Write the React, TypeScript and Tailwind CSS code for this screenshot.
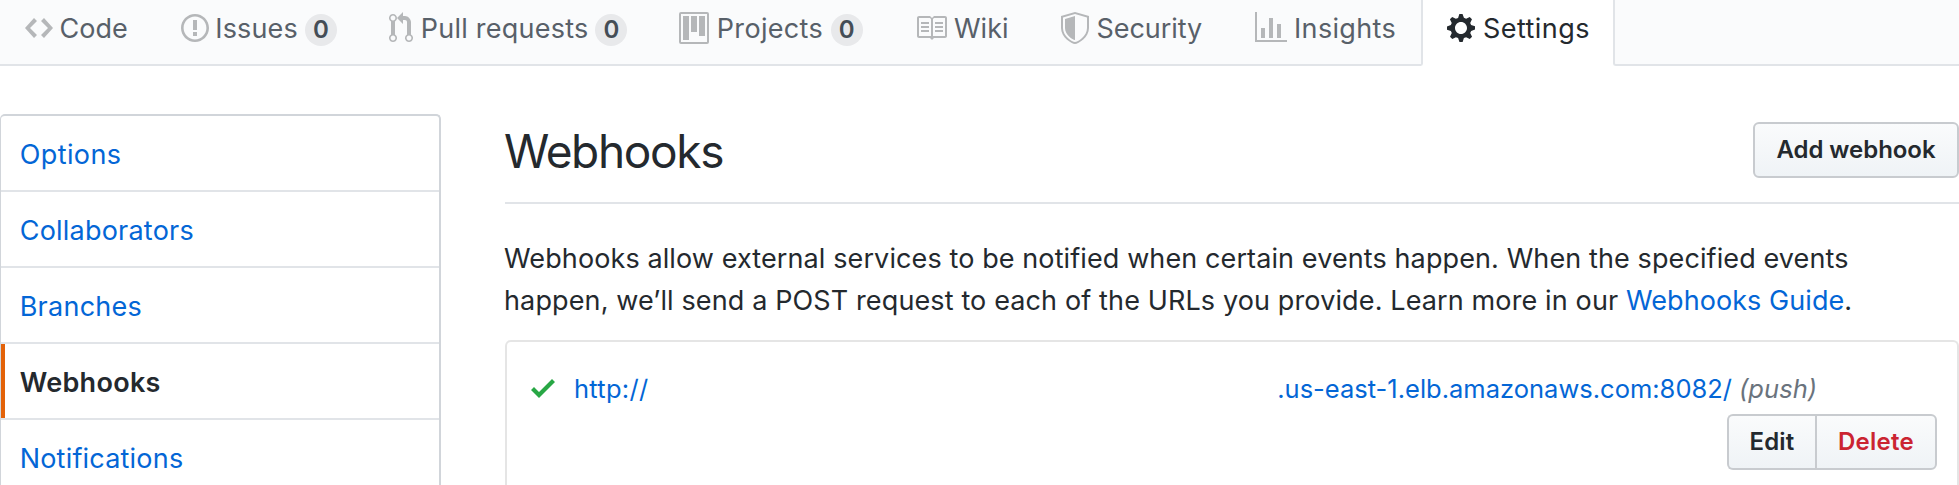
import type { ReactNode } from 'react';

type IconProps = { d: string; box: number; className: string };

function Octicon({ d, box, className }: IconProps) {
  return (
    <svg viewBox={`0 0 ${box} 16`} className={`h-8 shrink-0 ${className}`} fill="currentColor" fillRule="evenodd" aria-hidden="true">
      <path d={d} />
    </svg>
  );
}

const icons = {
  code: 'M9.5 3L8 4.5 11.5 8 8 11.5 9.5 13 14 8 9.5 3zm-5 0L0 8l4.5 5L6 11.5 2.5 8 6 4.5 4.5 3z',
  issue: 'M7 2.3c3.14 0 5.7 2.56 5.7 5.7s-2.56 5.7-5.7 5.7A5.71 5.71 0 0 1 1.3 8c0-3.14 2.56-5.7 5.7-5.7zM7 1C3.14 1 0 4.14 0 8s3.14 7 7 7 7-3.14 7-7-3.14-7-7-7zm1 3H6v5h2V4zm0 6H6v2h2v-2z',
  pull: 'M11 11.28V5c-.03-.78-.34-1.47-.94-2.06C9.46 2.35 8.78 2.03 8 2H7V0L4 3l3 3V4h1c.27.02.48.11.69.31.21.2.3.42.31.69v6.28A1.993 1.993 0 0 0 10 15a1.993 1.993 0 0 0 1-3.72zm-1 2.92c-.66 0-1.2-.55-1.2-1.2 0-.65.55-1.2 1.2-1.2.65 0 1.2.55 1.2 1.2 0 .65-.55 1.2-1.2 1.2zM4 3c0-1.11-.89-2-2-2a1.993 1.993 0 0 0-1 3.72v6.56A1.993 1.993 0 0 0 2 15a1.993 1.993 0 0 0 1-3.72V4.72c.59-.34 1-.98 1-1.72zm-.8 10c0 .66-.55 1.2-1.2 1.2-.65 0-1.2-.55-1.2-1.2 0-.65.55-1.2 1.2-1.2.65 0 1.2.55 1.2 1.2zM2 4.2C1.34 4.2.8 3.65.8 3c0-.65.55-1.2 1.2-1.2.65 0 1.2.55 1.2 1.2 0 .65-.55 1.2-1.2 1.2z',
  project: 'M10 12h3V2h-3v10zm-4-2h3V2H6v8zm-4 4h3V2H2v12zm-1 1h13V1H1v14zM14 0H1a1 1 0 0 0-1 1v14a1 1 0 0 0 1 1h13a1 1 0 0 0 1-1V1a1 1 0 0 0-1-1z',
  book: 'M3 5h4v1H3V5zm0 3h4V7H3v1zm0 2h4V9H3v1zm11-5h-4v1h4V5zm0 2h-4v1h4V7zm0 2h-4v1h4V9zm2-6v9c0 .55-.45 1-1 1H9.5l-1 1-1-1H2c-.55 0-1-.45-1-1V3c0-.55.45-1 1-1h5.5l1 1 1-1H15c.55 0 1 .45 1 1zm-8 .5L7.5 3H2v9h6V3.5zm7-.5H9.5l-.5.5V12h6V3z',
  shield: 'M0 2l7-2 7 2v6.02C14 12.69 8.69 16 7 16c-1.69 0-7-3.31-7-7.98V2zm1 .75L7 1l6 1.75v5.268C13 12.104 8.449 15 7 15c-1.449 0-6-2.896-6-6.982V2.75zm1 .75L7 2v12c-1.207 0-5-2.482-5-5.985V3.5z',
  graph: 'M16 14v1H0V0h1v14h15zM5 13H3V8h2v5zm4 0H7V3h2v10zm4 0h-2V6h2v7z',
  gear: 'M14 8.77v-1.6l-1.94-.64-.45-1.09.88-1.84-1.13-1.13-1.81.91-1.09-.45-.69-1.92h-1.6l-.63 1.94-1.11.45-1.84-.88-1.13 1.13.91 1.81-.45 1.09L0 7.23v1.59l1.94.64.45 1.09-.88 1.84 1.13 1.13 1.81-.91 1.09.45.69 1.92h1.59l.63-1.94 1.11-.45 1.84.88 1.13-1.13-.92-1.81.47-1.09L14 8.75v.02zM7 11c-1.66 0-3-1.34-3-3s1.34-3 3-3 3 1.34 3 3-1.34 3-3 3z',
  check: 'M12 5l-8 8-4-4 1.5-1.5L4 10l6.5-6.5L12 5z',
};

type Tab = { label: string; icon: string; box: number; iconClass: string; width: string; text: string; count?: string };

const tabs: Tab[] = [
  { label: 'Code', icon: icons.code, box: 14, iconClass: 'w-7', width: 'w-[156px]', text: 'ml-[6.5px]' },
  { label: 'Issues', icon: icons.issue, box: 14, iconClass: 'w-7', width: 'w-[208px]', text: 'ml-[6.3px] tracking-[0.148px]', count: 'ml-[7.1px]' },
  { label: 'Pull requests', icon: icons.pull, box: 12, iconClass: 'w-6', width: 'w-[290px]', text: 'ml-[7.7px] tracking-[0.242px]', count: 'ml-[7px]' },
  { label: 'Projects', icon: icons.project, box: 15, iconClass: 'w-[30px]', width: 'w-[236px]', text: 'ml-[7.8px] tracking-[0.325px]', count: 'ml-[7.5px]' },
  { label: 'Wiki', icon: icons.book, box: 16, iconClass: 'w-8', width: 'w-[146px]', text: 'ml-[7px]' },
  { label: 'Security', icon: icons.shield, box: 14, iconClass: 'w-7', width: 'w-[194px]', text: 'ml-[7.5px] tracking-[-0.063px]' },
  { label: 'Insights', icon: icons.graph, box: 16, iconClass: 'w-8', width: 'w-[166px]', text: 'ml-[7px] tracking-[0.345px]' },
];

function RepoNav() {
  return (
    <nav className="flex h-[66px] items-stretch text-[27px] leading-[42px] text-[#586069]">
      <div className="w-[25px] shrink-0 border-b-2 border-[#e1e4e8] bg-[#fafbfc]" />
      {tabs.map((tab) => (
        <a key={tab.label} className={`flex shrink-0 items-center border-b-2 border-[#e1e4e8] bg-[#fafbfc] pb-2 whitespace-nowrap ${tab.width}`}>
          <Octicon d={tab.icon} box={tab.box} className={`text-[#b5b7b9] ${tab.iconClass}`} />
          <span className={`pt-0.5 ${tab.text}`}>{tab.label}</span>
          {tab.count && (
            <span className={`mt-1 flex size-8 items-center justify-center rounded-full bg-[#e8e9eb] text-[24px] leading-8 font-semibold text-[#444d56] ${tab.count}`}>0</span>
          )}
        </a>
      ))}
      <div className="-ml-px w-[3px] shrink-0 rounded-br-[3px] border-r-2 border-b-2 border-[#e1e4e8]" />
      <a className="flex w-[190px] shrink-0 items-center pb-[10px] pl-6 whitespace-nowrap text-[#24292e]">
        <Octicon d={icons.gear} box={14} className="w-7" />
        <span className="ml-[8px] pt-0.5 tracking-[0.45px]">Settings</span>
      </a>
      <div className="grow rounded-bl-[3px] border-b-2 border-l-2 border-[#e1e4e8] bg-[#fafbfc]" />
    </nav>
  );
}

const menu = [
  { label: 'Options', text: 'tracking-[0.4px]' },
  { label: 'Collaborators', text: 'tracking-[0.22px]' },
  { label: 'Branches', text: 'tracking-[0.25px]' },
  { label: 'Webhooks', text: 'tracking-[0.3px]', selected: true },
  { label: 'Notifications', text: 'tracking-[0.2px]' },
];

function Sidebar() {
  return (
    <aside className="mt-12 w-[441px] shrink-0 rounded-t-[5px] border-2 border-b-0 border-l border-[#d1d5da] text-[27px] text-[#0366d6]">
      {menu.map((item) => (
        <a key={item.label} className={`flex h-[76px] items-center border-b-2 border-[#e1e4e8] leading-[42px] ${item.selected ? 'font-semibold text-[#24292e]' : ''}`}>
          <span className={`h-full w-1 ${item.selected ? 'bg-[#e36209]' : ''}`} />
          <span className={`ml-[14.7px] pt-[3px] ${item.text}`}>{item.label}</span>
        </a>
      ))}
    </aside>
  );
}

function Button({ className, children }: { className: string; children: ReactNode }) {
  return (
    <button className={`h-14 border-2 border-[#c8cbcf] bg-linear-to-b from-[#fafbfc] to-[#eff3f6] text-[24px] leading-[40px] font-semibold whitespace-nowrap ${className}`}>
      {children}
    </button>
  );
}

export default function App() {
  return (
    <div className="h-[485px] w-[1959px] overflow-hidden bg-white font-['Inter',sans-serif] text-[#24292e]">
      <RepoNav />
      <div className="flex h-[419px] items-stretch">
        <Sidebar />
        <main className="ml-16 flex grow flex-col pt-14">
          <header className="flex h-[82px] items-start justify-between border-b-2 border-[#e1e4e8]">
            <h2 className="-ml-px text-[46px] leading-[59px] tracking-[-1.35px]">Webhooks</h2>
            <Button className="w-[206px] rounded-[6px] tracking-[-0.05px]">Add webhook</Button>
          </header>
          <p className="mt-[34px] text-[27px] leading-[42px] whitespace-nowrap">
            <span className="-ml-px tracking-[0.105px]">Webhooks allow external services to be notified when certain events happen. When the specified events</span>
            <br />
            <span className="-ml-px tracking-[0.127px]">happen, we’ll send a POST request to each of the URLs you provide. Learn more in our </span>
            <a className="tracking-[0.062px] text-[#0366d6]">Webhooks Guide</a>.
          </p>
          <section className="mt-[18px] grow rounded-t-[6px] border-2 border-b-0 border-[#e5e5e5]">
            <div className="mt-[26px] flex h-10 items-center pl-6 text-[25.5px] leading-10 whitespace-nowrap">
              <Octicon d={icons.check} box={12} className="w-6 text-[#28a745]" />
              <a className="ml-[19px] flex w-[1158px] justify-between pt-0.5 text-[#0366d6]">
                <span className="tracking-[0.27px]">http://</span>
                <span>.us-east-1.elb.amazonaws.com:8082/</span>
              </a>
              <em className="ml-[7px] pt-0.5 tracking-[0.06px] text-[#6a737d]">(push)</em>
            </div>
            <div className="mt-1.5 flex justify-end pr-5">
              <Button className="w-[88px] rounded-l-[6px] border-r-0 tracking-[0.13px]">Edit</Button>
              <Button className="w-[122px] rounded-r-[6px] tracking-[0.26px] text-[#cb2431]">Delete</Button>
            </div>
          </section>
        </main>
      </div>
    </div>
  );
}
